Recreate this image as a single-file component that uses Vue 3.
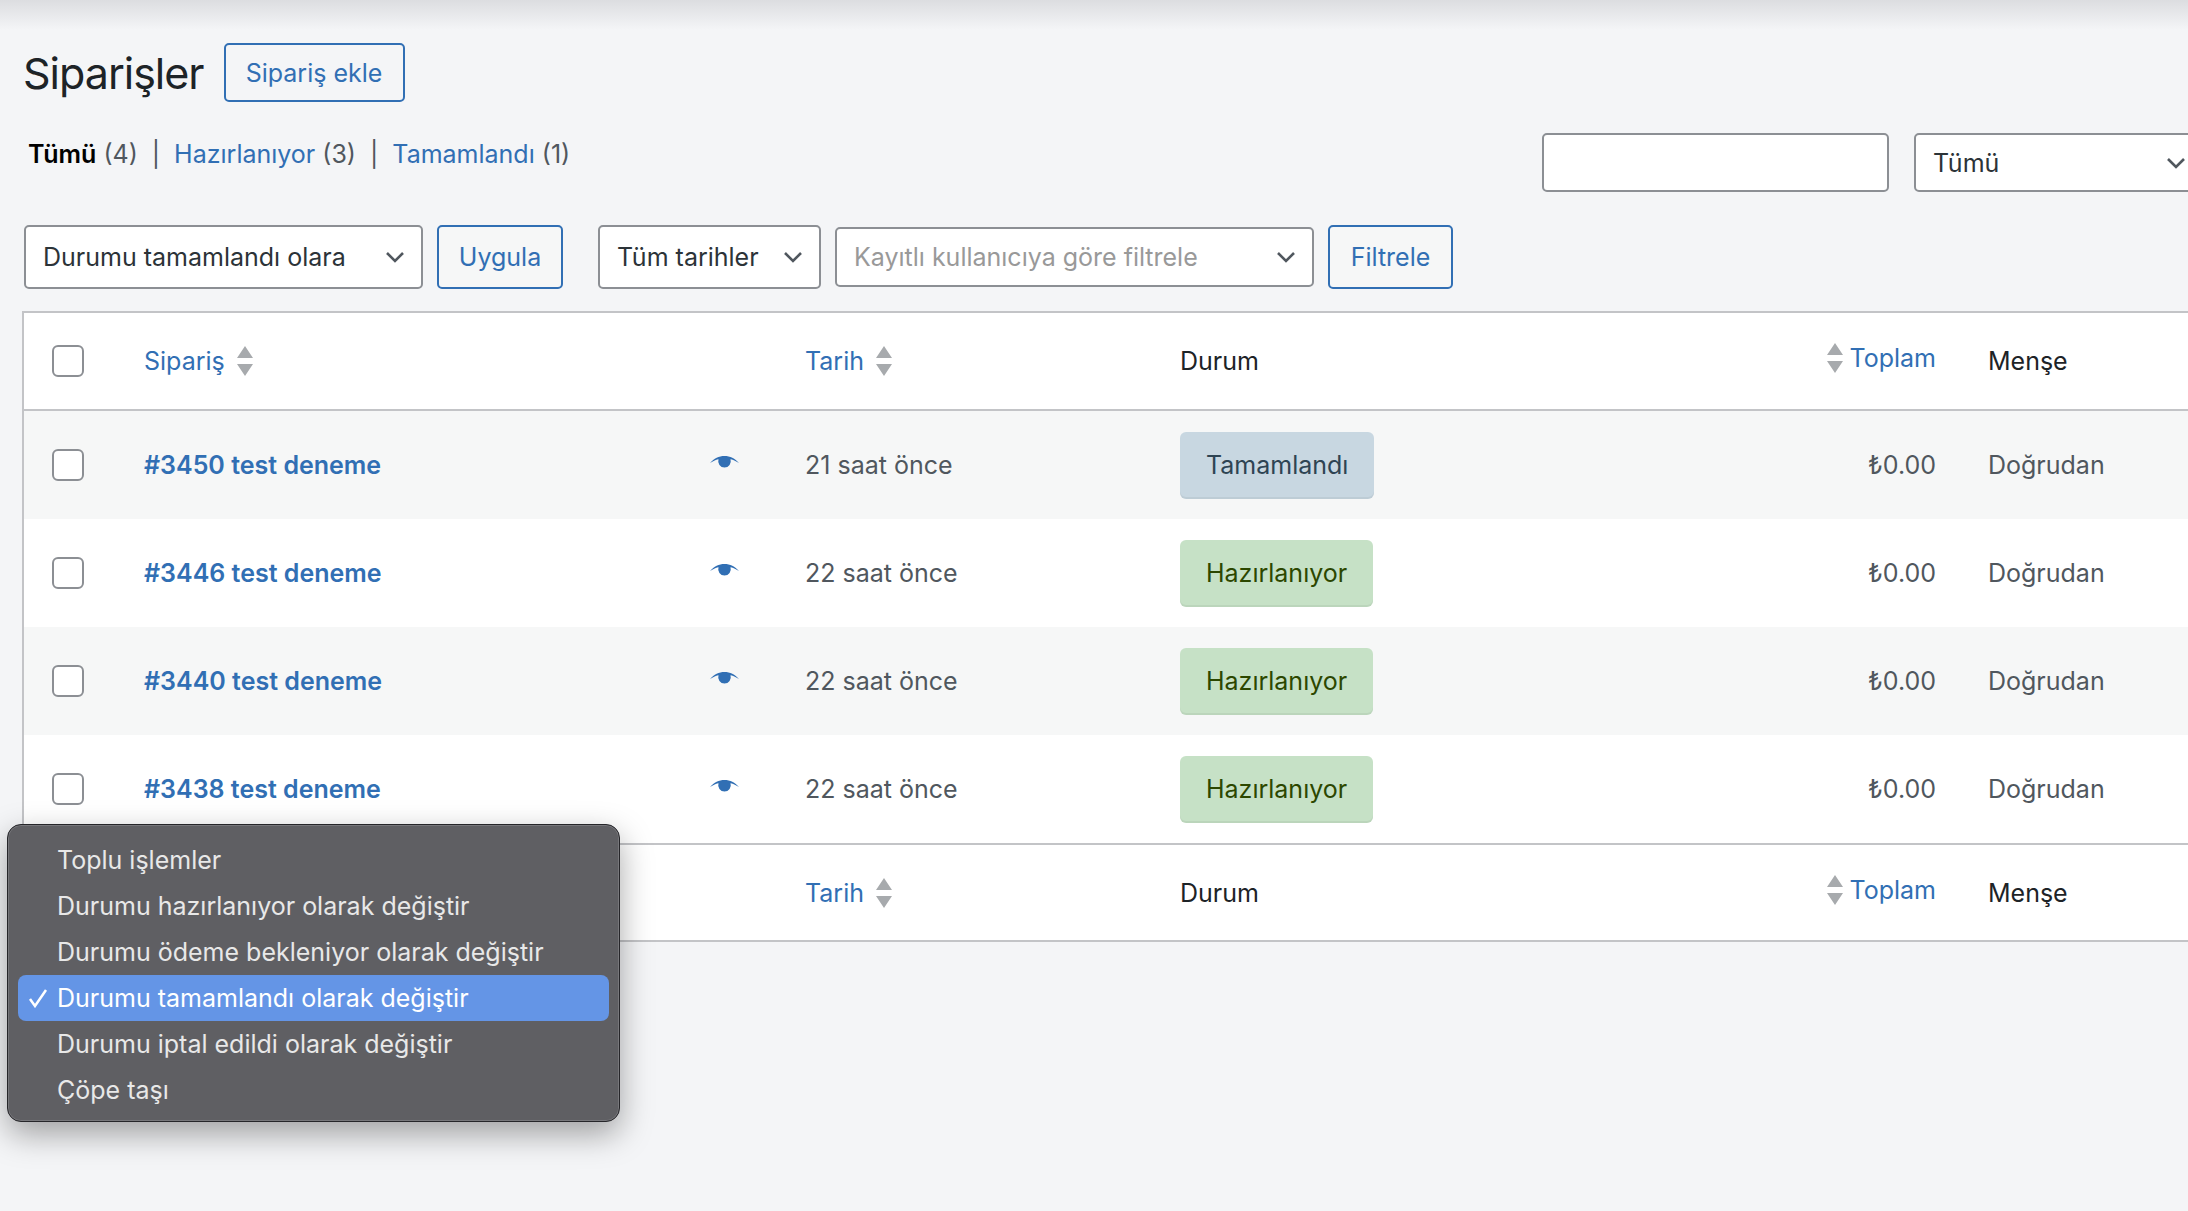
<script setup>
const orders = [
  { id: "#3450 test deneme", date: "21 saat önce", status: "Tamamlandı", kind: "done" },
  { id: "#3446 test deneme", date: "22 saat önce", status: "Hazırlanıyor", kind: "processing" },
  { id: "#3440 test deneme", date: "22 saat önce", status: "Hazırlanıyor", kind: "processing" },
  { id: "#3438 test deneme", date: "22 saat önce", status: "Hazırlanıyor", kind: "processing" },
];
const bulkActions = [
  "Toplu işlemler",
  "Durumu hazırlanıyor olarak değiştir",
  "Durumu ödeme bekleniyor olarak değiştir",
  "Durumu tamamlandı olarak değiştir",
  "Durumu iptal edildi olarak değiştir",
  "Çöpe taşı",
];
const selected = "Durumu tamamlandı olarak değiştir";
</script>

<template>
  <div class="page">
    <div class="topbar"></div>

    <div class="heading">
      <h1 class="heading__title">Siparişler</h1>
      <a class="btn btn--add">Sipariş ekle</a>
    </div>

    <div class="views-row">
      <ul class="views">
        <li><b>Tümü</b> <span class="count">(4)</span></li>
        <li class="sep">|</li>
        <li><a>Hazırlanıyor</a> <span class="count">(3)</span></li>
        <li class="sep">|</li>
        <li><a>Tamamlandı</a> <span class="count">(1)</span></li>
      </ul>
      <input class="search" type="text" />
      <div class="select select--status">
        <span>Tümü</span>
        <svg class="chevron" viewBox="0 0 20 12"><path d="M2 2l8 8 8-8" /></svg>
      </div>
    </div>

    <div class="filters">
      <div class="select select--bulk">
        <span>Durumu tamamlandı olara</span>
        <svg class="chevron" viewBox="0 0 20 12"><path d="M2 2l8 8 8-8" /></svg>
      </div>
      <a class="btn btn--apply">Uygula</a>
      <div class="select select--dates">
        <span>Tüm tarihler</span>
        <svg class="chevron" viewBox="0 0 20 12"><path d="M2 2l8 8 8-8" /></svg>
      </div>
      <div class="select select--customer">
        <span class="placeholder">Kayıtlı kullanıcıya göre filtrele</span>
        <svg class="chevron" viewBox="0 0 20 12"><path d="M2 2l8 8 8-8" /></svg>
      </div>
      <a class="btn btn--filter">Filtrele</a>
    </div>

    <div class="table-wrap">
      <table class="orders">
        <colgroup>
          <col style="width: 98px" />
          <col style="width: 661px" />
          <col style="width: 375px" />
          <col style="width: 522px" />
          <col style="width: 286px" />
          <col />
        </colgroup>
        <thead>
          <tr>
            <th><input class="check" type="checkbox" /></th>
            <th>
              <a class="sort sort--order">Sipariş
                <svg class="arrows" viewBox="0 0 16 30"><path d="M8 0l8 12H0zM0 18h16L8 30z" /></svg>
              </a>
            </th>
            <th>
              <a class="sort">Tarih
                <svg class="arrows" viewBox="0 0 16 30"><path d="M8 0l8 12H0zM0 18h16L8 30z" /></svg>
              </a>
            </th>
            <th class="plain">Durum</th>
            <th class="num">
              <a class="sort sort--total">
                <svg class="arrows" viewBox="0 0 16 30"><path d="M8 0l8 12H0zM0 18h16L8 30z" /></svg>
                Toplam
              </a>
            </th>
            <th class="plain">Menşe</th>
          </tr>
        </thead>
        <tbody>
          <tr v-for="o in orders" :key="o.id">
            <td><input class="check" type="checkbox" /></td>
            <td>
              <div class="order-cell">
                <a class="order-link">{{ o.id }}</a>
                <svg class="eye" viewBox="0 0 29 14">
                  <path d="M0 7C4 2.500 9 0 14.500 0S25 2.500 29 7C25 4.600 22 3.500 20.500 3.300A6.300 6.300 0 1 1 8.500 3.300C7 3.500 4 4.600 0 7z" />
                </svg>
              </div>
            </td>
            <td>{{ o.date }}</td>
            <td>
              <span class="badge" :class="`badge--${o.kind}`">{{ o.status }}</span>
            </td>
            <td class="num">₺0.00</td>
            <td>Doğrudan</td>
          </tr>
        </tbody>
        <tfoot>
          <tr>
            <th></th>
            <th></th>
            <th>
              <a class="sort">Tarih
                <svg class="arrows" viewBox="0 0 16 30"><path d="M8 0l8 12H0zM0 18h16L8 30z" /></svg>
              </a>
            </th>
            <th class="plain">Durum</th>
            <th class="num">
              <a class="sort sort--total">
                <svg class="arrows" viewBox="0 0 16 30"><path d="M8 0l8 12H0zM0 18h16L8 30z" /></svg>
                Toplam
              </a>
            </th>
            <th class="plain">Menşe</th>
          </tr>
        </tfoot>
      </table>
    </div>

    <ul class="menu">
      <li
        v-for="item in bulkActions"
        :key="item"
        class="menu__item"
        :class="{ 'menu__item--on': item === selected }"
      >
        <svg v-if="item === selected" class="menu__tick" viewBox="0 0 20 20">
          <path d="M2 11l5 7L18 2" />
        </svg>
        {{ item }}
      </li>
    </ul>
  </div>
</template>

<style>
html,
body {
  margin: 0;
  background: #f4f5f7;
}
</style>

<style scoped>
.page {
  position: relative;
  width: 2188px;
  height: 1211px;
  overflow: hidden;
  background: #f4f5f7;
  font-family: Inter, "Noto Sans", sans-serif;
  font-size: 25px;
  color: #50575e;
}
a {
  color: #316fb4;
  text-decoration: none;
}
.topbar {
  height: 30px;
  background: linear-gradient(180deg, #dcdde0 0%, #f4f5f7 100%);
}
.heading {
  display: flex;
  align-items: center;
  gap: 20px;
  margin-top: 13px;
  padding-left: 23px;
}
.heading__title {
  margin: 0;
  font-size: 43px;
  font-weight: 400;
  letter-spacing: -1px;
  color: #1d2327;
}
.btn {
  display: flex;
  align-items: center;
  justify-content: center;
  box-sizing: border-box;
  height: 64px;
  border: 2px solid #316fb4;
  border-radius: 5px;
  background: #f6f7f7;
}
.btn--add {
  width: 181px;
  height: 59px;
  background: none;
}
.btn--apply {
  width: 126px;
  margin-left: 14px;
}
.btn--filter {
  width: 125px;
  margin-left: 14px;
}
.views-row {
  display: flex;
  align-items: center;
  height: 59px;
  margin-top: 31px;
  padding-left: 28px;
}
.views {
  display: flex;
  gap: 14px;
  margin: 0 0 18px;
  padding: 0;
  list-style: none;
}
.views b {
  color: #000;
  font-weight: 600;
}
.count,
.sep {
  color: #50575e;
}
.search {
  box-sizing: border-box;
  width: 347px;
  height: 59px;
  margin-left: auto;
  border: 2px solid #8c8f94;
  border-radius: 5px;
  background: #fff;
}
.select {
  display: flex;
  align-items: center;
  justify-content: space-between;
  box-sizing: border-box;
  height: 64px;
  padding: 0 16px 0 17px;
  border: 2px solid #8c8f94;
  border-radius: 5px;
  background: #fff;
  color: #2c3338;
}
.select--status {
  flex: none;
  width: 290px;
  height: 59px;
  margin-left: 25px;
  margin-right: -16px;
}
.select--bulk {
  width: 399px;
}
.select--dates {
  width: 223px;
  margin-left: 35px;
}
.select--customer {
  width: 479px;
  height: 60px;
  margin-left: 14px;
  color: #999;
}
.placeholder {
  color: #999;
}
.chevron {
  width: 20px;
  height: 12px;
  fill: none;
  stroke: #50575e;
  stroke-width: 2.600;
}
.filters {
  display: flex;
  align-items: center;
  margin-top: 33px;
  padding-left: 24px;
}
.table-wrap {
  box-sizing: border-box;
  width: 2230px;
  margin: 22px 0 0 22px;
  border: 2px solid #c3c4c7;
  background: #fff;
}
.orders {
  width: 100%;
  table-layout: fixed;
  border-collapse: separate;
  border-spacing: 0;
}
.orders th,
.orders td {
  padding: 0 0 0 22px;
  text-align: left;
  font-weight: 400;
  vertical-align: middle;
}
.orders thead th {
  height: 96px;
  border-bottom: 2px solid #c3c4c7;
}
.orders tbody td {
  height: 108px;
}
.orders tbody tr:nth-child(odd) {
  background: #f6f7f7;
}
.orders tfoot th {
  height: 95px;
  border-top: 2px solid #c3c4c7;
}
.orders .num {
  padding-right: 30px;
  text-align: right;
}
.plain {
  color: #1d2327;
}
.sort {
  display: inline-flex;
  align-items: center;
  gap: 12px;
}
.sort--total {
  gap: 7px;
}
.arrows {
  width: 16px;
  height: 30px;
  fill: #a7aaad;
}
.check {
  display: block;
  box-sizing: border-box;
  width: 32px;
  height: 32px;
  margin: 0 0 0 6px;
  border: 2px solid #8c8f94;
  border-radius: 6px;
  background: #fff;
  appearance: none;
}
.order-cell {
  display: flex;
  align-items: center;
}
.order-link {
  flex: 0 0 566px;
  font-weight: 600;
}
.eye {
  width: 29px;
  height: 14px;
  margin-bottom: 4px;
  fill: #316fb4;
}
.badge {
  display: inline-flex;
  align-items: center;
  height: 67px;
  padding: 0 26px;
  border-radius: 6px;
  box-shadow: inset 0 -2px 0 rgba(0, 0, 0, 0.05);
}
.badge--done {
  background: #c8d7e1;
  color: #2e4453;
}
.badge--processing {
  background: #c6e1c6;
  color: #2c4700;
}
.menu {
  position: absolute;
  left: 7px;
  top: 824px;
  box-sizing: border-box;
  width: 613px;
  height: 298px;
  margin: 0;
  padding: 12px 10px 10px;
  border: 1px solid #26262a;
  border-radius: 14px;
  background: #5f5f63;
  box-shadow: 0 12px 32px rgba(0, 0, 0, 0.35), inset 0 0 0 1px #77777b;
  list-style: none;
  color: #e8e8e8;
}
.menu__item {
  position: relative;
  height: 46px;
  padding-left: 39px;
  border-radius: 8px;
  line-height: 46px;
}
.menu__item--on {
  background: #6495e6;
  color: #fff;
}
.menu__tick {
  position: absolute;
  left: 10px;
  top: 13px;
  width: 20px;
  height: 20px;
  fill: none;
  stroke: #fff;
  stroke-width: 2.500;
}
</style>
